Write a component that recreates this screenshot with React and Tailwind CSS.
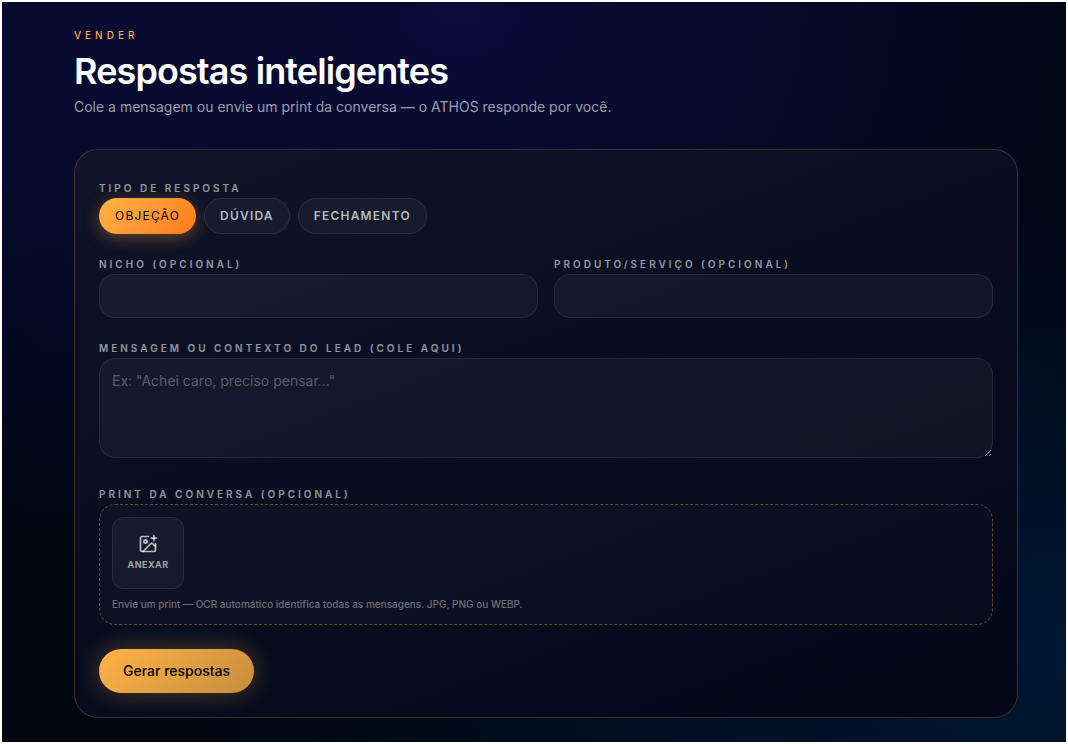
import React, { useState } from 'react';
import { ImagePlus } from 'lucide-react';

const RESPONSE_TYPES = [
  { id: 'objecao', label: 'Objeção' },
  { id: 'duvida', label: 'Dúvida' },
  { id: 'fechamento', label: 'Fechamento' },
];

const labelClass = 'text-[10px] font-semibold uppercase tracking-[0.3em] text-white/55';
const fieldClass =
  'block w-full rounded-2xl border border-white/8 bg-white/4 px-3 text-sm text-white outline-none placeholder:text-white/30 focus:border-amber-400/50';

const TypePill = ({ label, active, onClick }) => (
  <button
    type="button"
    aria-pressed={active}
    onClick={onClick}
    className={`h-9 rounded-full border px-[15px] text-xs uppercase tracking-widest transition-colors ${
      active
        ? 'border-transparent bg-linear-135 from-[#ffb347] to-[#ff7a18] bg-origin-border font-normal text-black shadow-[0_4px_16px_rgba(255,160,50,0.35)]'
        : 'border-white/8 bg-white/4 font-semibold text-white/70 hover:text-white'
    }`}
  >
    {label}
  </button>
);

export default function App() {
  const [type, setType] = useState('objecao');
  const [niche, setNiche] = useState('');
  const [product, setProduct] = useState('');
  const [message, setMessage] = useState('');

  return (
    <div className="min-h-screen border-2 border-white bg-[#010610] bg-[radial-gradient(ellipse_70%_90%_at_43%_0%,#0a0c3a_0%,transparent_100%),radial-gradient(ellipse_85%_65%_at_100%_88%,#001733_0%,transparent_100%),radial-gradient(ellipse_35%_60%_at_0%_12%,#050a2a_0%,transparent_100%)] pt-[26px] pr-12 pb-6 pl-[72px] font-['Inter',sans-serif] text-white">
      {/* Header */}
      <header className="mb-8">
        <p className="text-[10px] leading-[15px] font-medium uppercase tracking-[0.4em] text-[#ffa63d]">
          Vender
        </p>
        <h1 className="mt-2 text-4xl font-semibold tracking-tight">Respostas inteligentes</h1>
        <p className="mt-1.5 text-sm text-white/60">
          Cole a mensagem ou envie um print da conversa — o ATHOS responde por você.
        </p>
      </header>

      {/* Form card */}
      <form
        onSubmit={(e) => e.preventDefault()}
        className="rounded-3xl border border-[#ffb347]/20 bg-linear-160 from-[#101428] via-[#0a0d20] to-[#040819] p-6"
      >
        <div className="space-y-4">
          <div role="group" aria-labelledby="type-label">
            <span id="type-label" className={labelClass}>Tipo de resposta</span>
            <div className="flex flex-wrap gap-2">
              {RESPONSE_TYPES.map((item) => (
                <TypePill
                  key={item.id}
                  label={item.label}
                  active={type === item.id}
                  onClick={() => setType(item.id)}
                />
              ))}
            </div>
          </div>

          <div className="grid gap-4 sm:grid-cols-2">
            <div>
              <label htmlFor="niche" className={labelClass}>Nicho (opcional)</label>
              <input
                id="niche"
                type="text"
                value={niche}
                onChange={(e) => setNiche(e.target.value)}
                className={`${fieldClass} h-11`}
              />
            </div>
            <div>
              <label htmlFor="product" className={labelClass}>Produto/Serviço (opcional)</label>
              <input
                id="product"
                type="text"
                value={product}
                onChange={(e) => setProduct(e.target.value)}
                className={`${fieldClass} h-11`}
              />
            </div>
          </div>

          <div className="pb-1.5">
            <label htmlFor="message" className={labelClass}>
              Mensagem ou contexto do lead (cole aqui)
            </label>
            <textarea
              id="message"
              value={message}
              onChange={(e) => setMessage(e.target.value)}
              placeholder={'Ex: "Achei caro, preciso pensar..."'}
              className={`${fieldClass} h-[100px] resize-y py-3`}
            />
          </div>

          <div>
            <label htmlFor="attachment" className={labelClass}>Print da conversa (opcional)</label>
            <div className="rounded-2xl border border-dashed border-[#ffb347]/35 bg-white/2 p-3">
              <input id="attachment" type="file" accept="image/*" className="hidden" />
              <button
                type="button"
                onClick={() => document.getElementById('attachment').click()}
                className="flex size-[72px] flex-col items-center justify-center gap-1 rounded-xl border border-white/8 bg-white/4 text-white/60 transition-colors hover:text-white"
              >
                <ImagePlus size={20} className="text-white/70" />
                <span className="text-[9px] leading-[14px] font-bold uppercase tracking-wider">Anexar</span>
              </button>
              <p className="mt-2 text-[10px] leading-[15px] font-medium text-white/40">
                Envie um print — OCR automático identifica todas as mensagens. JPG, PNG ou WEBP.
              </p>
            </div>
          </div>
        </div>

        <button
          type="submit"
          className="mt-6 block h-11 rounded-full bg-linear-135 from-[#ffb347] to-[#c68e3c] px-6 text-sm font-medium text-black shadow-[0_0_24px_rgba(255,179,71,0.3)]"
        >
          Gerar respostas
        </button>
      </form>
    </div>
  );
}
